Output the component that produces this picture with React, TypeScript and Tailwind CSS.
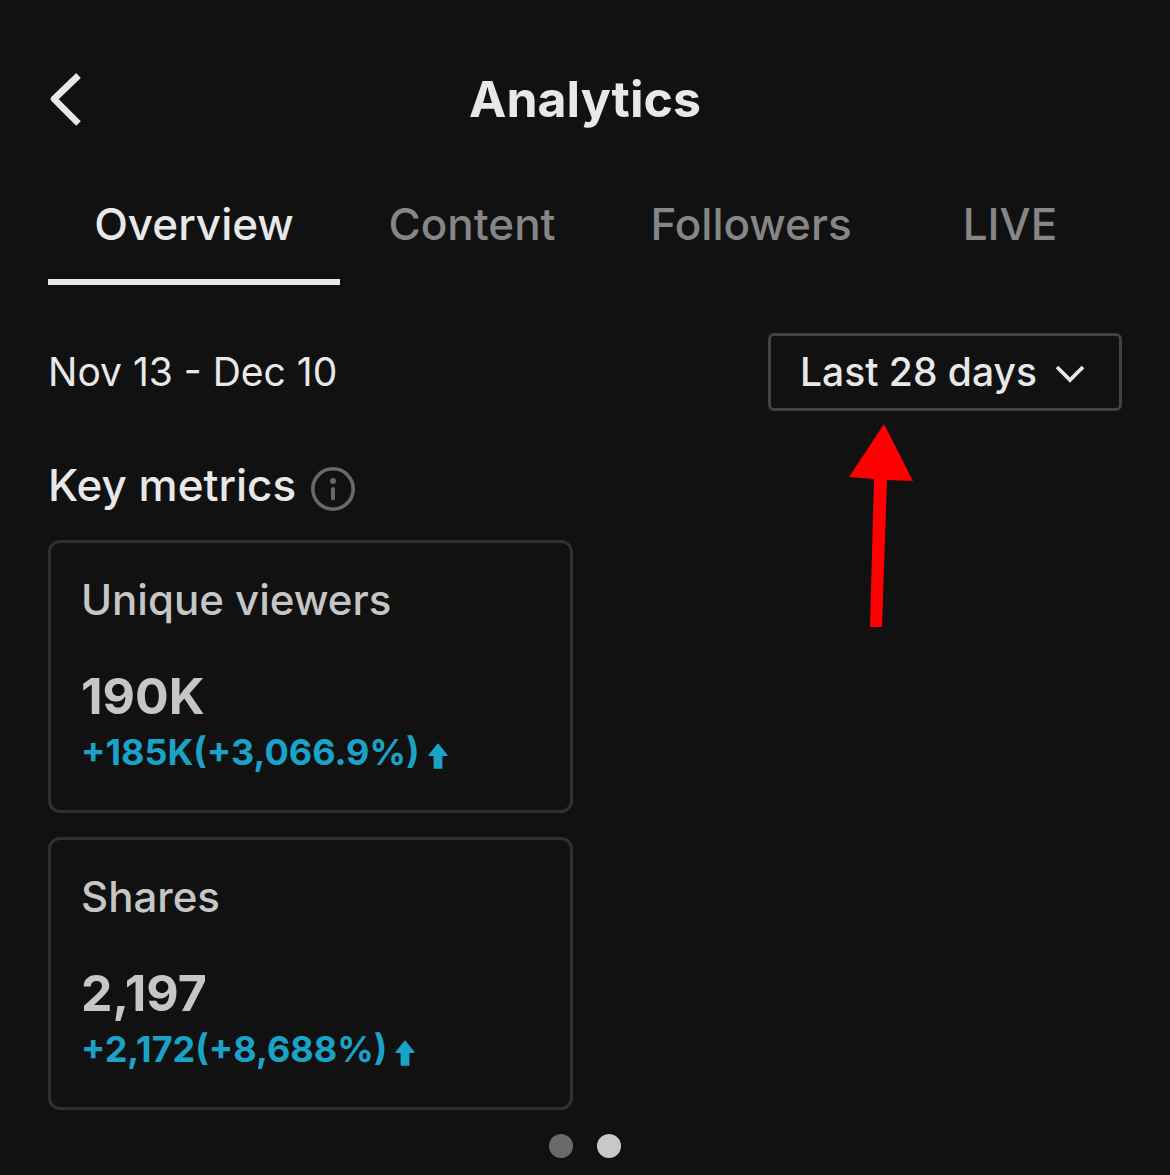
import React, { useState } from "react";

const tabs = ["Overview", "Content", "Followers", "LIVE"];

const metrics = [
  { label: "Unique viewers", value: "190K", change: "+185K(+3,066.9%)" },
  { label: "Shares", value: "2,197", change: "+2,172(+8,688%)" },
];

function UpArrow() {
  return (
    <svg viewBox="0 0 20 26" className="mt-2 h-[26px] w-5 shrink-0" aria-hidden="true">
      <path
        d="M10 1.2 18.8 12.2H13.7V25H6.3V12.2H1.2Z"
        fill="#1aa3c6"
        stroke="#1aa3c6"
        strokeWidth="1.4"
        strokeLinejoin="round"
      />
    </svg>
  );
}

function MetricCard({ label, value, change }: (typeof metrics)[number]) {
  return (
    <article className="rounded-xl border-[3px] border-[#303030] px-[30px] pt-[31px] pb-8 text-[#c6c6c6]">
      <h3 className="text-[42px] leading-[52px] font-medium">{label}</h3>
      <p className="mt-10 text-[50px] leading-[60px] font-bold">{value}</p>
      <p className="flex items-center gap-2 text-[36px] leading-[52px] font-bold text-[#1aa3c6]">
        <span>{change}</span>
        <UpArrow />
      </p>
    </article>
  );
}

export default function App() {
  const [active, setActive] = useState("Overview");
  const [page, setPage] = useState(1);

  return (
    <main className="min-h-screen bg-[#111111] px-12 pt-16 pb-4 font-['Inter',sans-serif] text-[#e8e8e8]">
      <header className="grid grid-cols-[40px_1fr_40px] items-center">
        <button type="button" aria-label="Back">
          <svg viewBox="0 0 40 56" className="h-14 w-10" fill="none" aria-hidden="true">
            <path
              d="M30.5 4.5 6 28 30.5 52.5"
              stroke="currentColor"
              strokeWidth="6.6"
              strokeLinejoin="round"
            />
          </svg>
        </button>
        <h1 className="text-center text-[50px] leading-[70px] font-bold">Analytics</h1>
      </header>

      <nav className="mt-15 grid grid-cols-[292fr_264fr_294fr_224fr]">
        {tabs.map((tab) => (
          <button
            key={tab}
            type="button"
            onClick={() => setActive(tab)}
            className={`border-b-6 pb-[25px] text-[44px] leading-[60px] font-medium ${
              active === tab
                ? "border-[#e8e8e8] text-[#e8e8e8]"
                : "border-transparent text-[#868686]"
            }`}
          >
            {tab}
          </button>
        ))}
      </nav>

      <section className="mt-12 flex items-center justify-between">
        <p className="text-[39px] leading-[52px]">Nov 13 - Dec 10</p>
        <div className="relative">
          <select
            aria-label="Date range"
            className="h-[78px] w-[354px] appearance-none rounded-md border-[3px] border-[#424242] bg-transparent pl-[29px] text-[39px] font-medium"
          >
            <option>Last 28 days</option>
          </select>
          <svg
            viewBox="0 0 30 20"
            className="pointer-events-none absolute top-[31px] right-[37px] h-5 w-[30px]"
            fill="none"
            aria-hidden="true"
          >
            <path d="M2 3 15 16 28 3" stroke="currentColor" strokeWidth="3.8" />
          </svg>
          <svg
            viewBox="0 0 68 206"
            className="pointer-events-none absolute top-[90px] left-20 h-[206px] w-[68px]"
            aria-hidden="true"
          >
            <path d="M36 1 65 58 39 57 34 204H22L26 56 1 54Z" fill="#ff0000" />
          </svg>
        </div>
      </section>

      <section className="mt-11">
        <div className="flex items-center gap-[15px]">
          <h2 className="text-[44px] leading-[60px] font-medium">Key metrics</h2>
          <button type="button" aria-label="About key metrics" className="mt-2 text-[#696969]">
            <svg viewBox="0 0 44 44" className="size-11" fill="none" aria-hidden="true">
              <circle cx="22" cy="22" r="20.2" stroke="currentColor" strokeWidth="3.6" />
              <circle cx="22" cy="14" r="3" fill="currentColor" />
              <path
                d="M22 22v9.5"
                stroke="currentColor"
                strokeWidth="4"
                strokeLinecap="round"
              />
            </svg>
          </button>
        </div>
        <div className="mt-[25px] grid grid-cols-2 gap-6">
          <div className="grid gap-6">
            {metrics.map((metric) => (
              <MetricCard key={metric.label} {...metric} />
            ))}
          </div>
        </div>
      </section>

      <div className="mt-6 flex justify-center gap-6">
        {[0, 1].map((dot) => (
          <button
            key={dot}
            type="button"
            aria-label={`Page ${dot + 1}`}
            onClick={() => setPage(dot)}
            className={`size-6 rounded-full ${page === dot ? "bg-[#c8c8c8]" : "bg-[#696969]"}`}
          />
        ))}
      </div>
    </main>
  );
}
